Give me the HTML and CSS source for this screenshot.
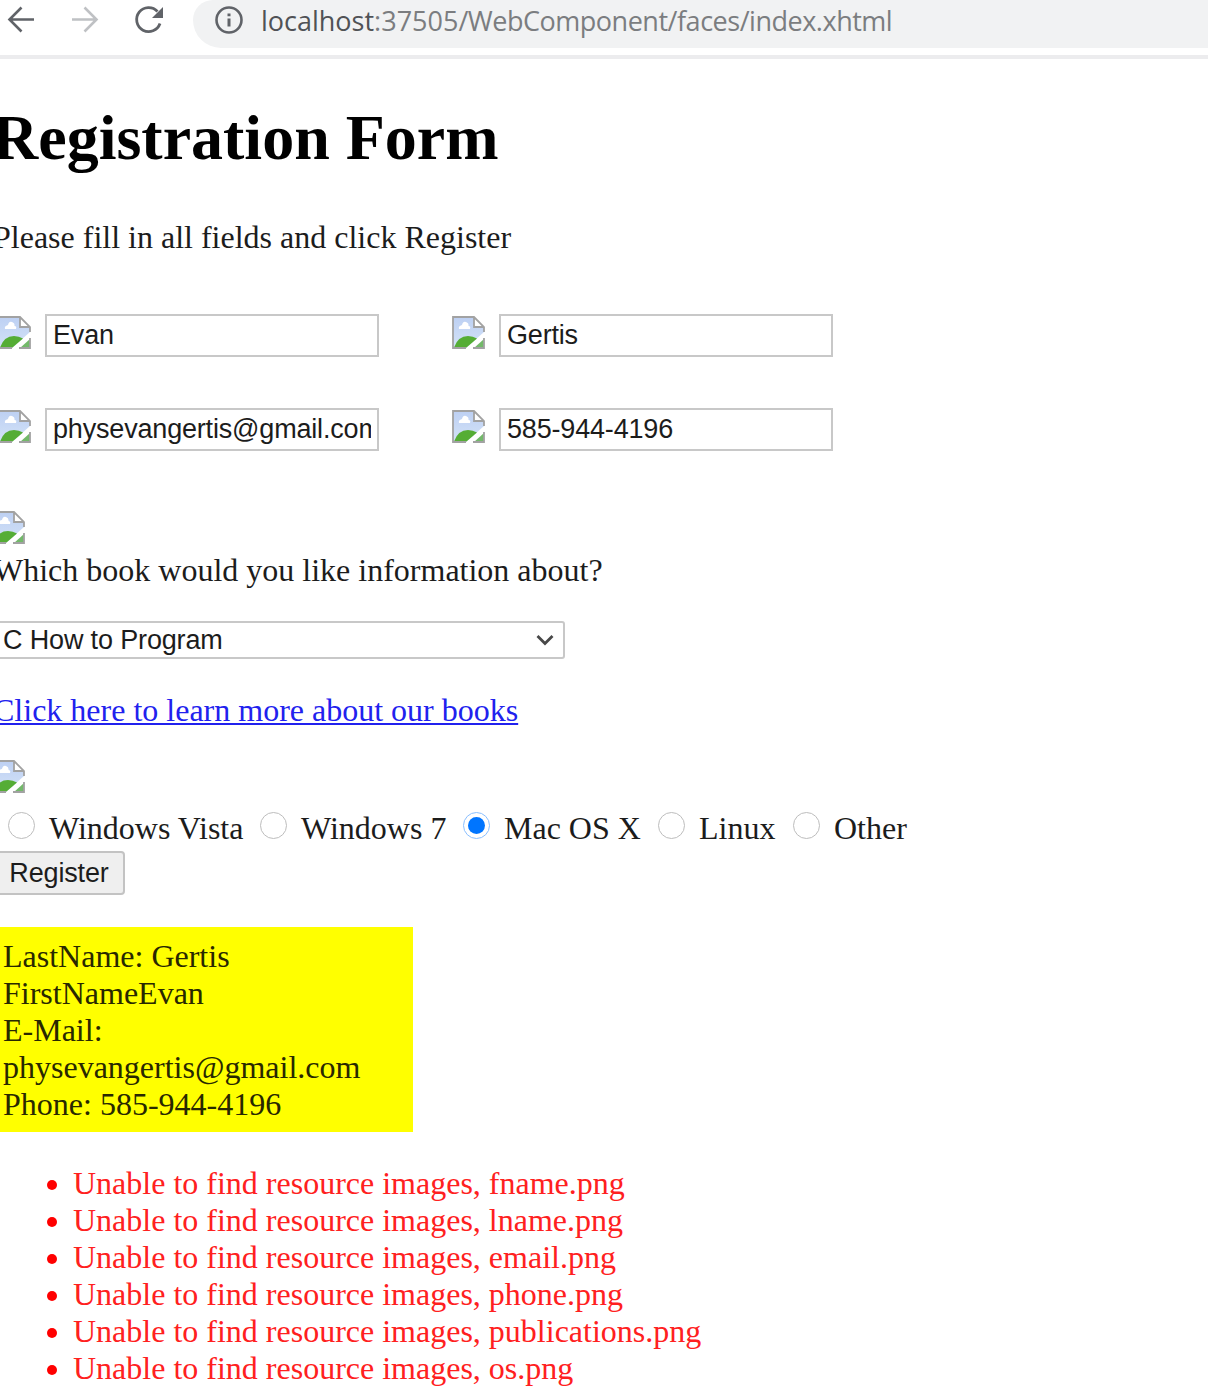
FILE: index.html
```html
<!DOCTYPE html>
<html lang="en">
<head>
<meta charset="utf-8">
<title>Registration Form</title>
<link rel="stylesheet" href="styles.css">
</head>
<body>
<svg class="defs" width="0" height="0" aria-hidden="true">
  <defs>
    <linearGradient id="sky" x1="0" y1="0" x2="0" y2="1"><stop offset="0" stop-color="#bdd0f3"/><stop offset="1" stop-color="#d3e2f7"/></linearGradient>
    <symbol id="broken" viewBox="0 0 33 33">
      <path d="M1 1H22V11H32V16L14 32H1Z" fill="url(#sky)"/>
      <path d="M7 13Q6 10 10 9Q11 5 14 6Q17 7 16.500 10Q19 10 18 13Z" fill="#fff"/>
      <path d="M2 31.500Q6 20 16 20Q21 20 25 22.500L14.500 31.500Z" fill="#55ad35"/>
      <path d="M14 32H1V1H22L32 11V16M22 1V11H32" fill="none" stroke="#a2a2a2" stroke-width="1.8"/>
      <path d="M32 23V32H22Z" fill="#73b96a"/>
      <path d="M32 22V32H21" fill="none" stroke="#a2a2a2" stroke-width="1.8"/>
    </symbol>
  </defs>
</svg>
<header class="toolbar">
  <svg class="nav" viewBox="0 0 190 47" fill="none" stroke="#606368" stroke-width="2.6">
    <path d="M34 19.5H10M21.500 7.500L9.500 19.500L21.500 31.500"/>
    <path d="M72 19.500H96M84.500 7.500L96.500 19.500L84.500 31.500" stroke="#bfc1c4"/>
    <path d="M160 23.500A12 12 0 1 1 157.500 11.500" stroke-width="2.8"/>
    <path d="M163 7V18H152Z" fill="#606368" stroke="none"/>
  </svg>
  <div class="address">
    <svg class="info" viewBox="0 0 28 28" fill="none" stroke="#606368" stroke-width="2.6"><circle cx="14" cy="14" r="12.500"/><path d="M14 12.500V20.500M14 7.500V10.300" stroke-width="3"/></svg>
    <span class="url"><span class="host">localhost</span>:37505<span class="path">/WebComponent/faces/index.xhtml</span></span>
  </div>
</header>
<main class="page">
  <h1 class="title">Registration Form</h1>
  <p class="intro">Please fill in all fields and click Register</p>
  <div class="fields">
    <div class="field"><svg class="broken"><use href="#broken"/></svg><input class="input" value="Evan"></div>
    <div class="field"><svg class="broken"><use href="#broken"/></svg><input class="input" value="Gertis"></div>
    <div class="field"><svg class="broken"><use href="#broken"/></svg><input class="input" value="physevangertis@gmail.com"></div>
    <div class="field"><svg class="broken"><use href="#broken"/></svg><input class="input" value="585-944-4196"></div>
  </div>
  <svg class="broken section-icon"><use href="#broken"/></svg>
  <p class="question">Which book would you like information about?</p>
  <div class="select"><span>C How to Program</span><svg class="chevron" viewBox="0 0 18 12"><path d="M1.500 2L9 9.500L16.500 2" fill="none" stroke="#484848" stroke-width="2.800"/></svg></div>
  <p class="more"><a class="link" href="#">Click here to learn more about our books</a></p>
  <svg class="broken section-icon"><use href="#broken"/></svg>
  <div class="radios">
    <label class="option vista"><span class="dot"></span><span>Windows Vista</span></label>
    <label class="option seven"><span class="dot"></span><span>Windows 7</span></label>
    <label class="option mac"><span class="dot checked"></span><span>Mac OS X</span></label>
    <label class="option linux"><span class="dot"></span><span>Linux</span></label>
    <label class="option"><span class="dot"></span><span>Other</span></label>
  </div>
  <button class="register">Register</button>
  <div class="result">LastName: Gertis<br>FirstNameEvan<br>E-Mail:<br>physevangertis@gmail.com<br>Phone: 585-944-4196</div>
  <ul class="errors">
    <li>Unable to find resource images, fname.png</li>
    <li>Unable to find resource images, lname.png</li>
    <li>Unable to find resource images, email.png</li>
    <li>Unable to find resource images, phone.png</li>
    <li>Unable to find resource images, publications.png</li>
    <li>Unable to find resource images, os.png</li>
  </ul>
</main>
</body>
</html>
```
FILE: styles.css
```css
* { box-sizing: border-box; }
html, body { overflow: hidden; }
body { margin: 0; height: 1393px; background: #fff; color: #1c1c1c; font: 32px/37px "Liberation Serif", "Times New Roman", serif; }
p, h1, ul { margin: 0; }
.defs { position: absolute; }
.toolbar { display: flex; height: 59px; border-bottom: 4px solid #ececee; }
.nav { width: 190px; height: 47px; flex: none; margin-right: 3px; }
.address { flex: 1; height: 48px; padding-left: 22px; display: flex; align-items: flex-start; background: #f1f2f3; border-radius: 20px 0 0 28px; }
.info { width: 28px; height: 28px; margin: 6px 18px 0 0; flex: none; }
.url { font: 27px/41px "Open Sans", sans-serif; color: #7b7d80; white-space: nowrap; }
.host { color: #505256; }
.path { letter-spacing: -0.48px; }
.page { margin-left: -8px; }
.title { height: 72px; margin-top: 43px; font-size: 64px; line-height: 72px; color: #000; white-space: nowrap; }
.intro { margin: 45px 0 0 1px; }
.fields { display: grid; grid-template-columns: 454px 382px; row-gap: 51px; margin: 58px 0 0 6px; }
.field { display: flex; align-items: flex-start; height: 43px; }
.broken { width: 33px; height: 33px; display: block; flex: none; margin: 2px 14px 0 0; }
.input { width: 334px; height: 43px; margin: 0; padding: 0 6px; border: 2px solid #c8c8c8; background: #fff; color: #1c1c1c; font: 27px "Liberation Sans", Arial, sans-serif; letter-spacing: -0.18px; }
.section-icon { margin: 60px 0 0; }
.question { margin: 8px 0 0 1px; }
.select { display: flex; align-items: center; justify-content: space-between; width: 573px; height: 38px; margin-top: 32px; padding: 0 9px 0 9px; border: 2px solid #c8c8c8; border-radius: 3px; font: 27px "Liberation Sans", Arial, sans-serif; letter-spacing: -0.15px; }
.chevron { width: 18px; height: 12px; }
.more { margin: 33px 0 0 1px; }
.link { color: #2121ee; text-decoration-thickness: 2px; text-underline-offset: 2px; }
.more + .section-icon { margin-top: 31px; }
.radios { display: flex; height: 37px; margin: 17px 0 0 17px; white-space: nowrap; }
.option { display: flex; width: 135px; }
.vista { width: 252px; }
.seven { width: 203px; }
.mac { width: 195px; }
.dot { width: 27px; height: 27px; flex: none; margin: 2px 14px 0 -1px; border: 1.5px solid #bdbdbd; border-radius: 50%; display: grid; place-items: center; }
.checked { border-color: #8abfff; }
.checked::after { content: ""; width: 17px; height: 17px; border-radius: 50%; background: #0075ff; }
.register { display: block; width: 133px; height: 44px; margin: 4px 0 0; padding: 0 0 0 1px; border: 2px solid #c3c3c3; border-radius: 4px; background: #efefef; color: #1c1c1c; font: 27px "Liberation Sans", Arial, sans-serif; letter-spacing: -0.15px; }
.result { width: 421px; height: 205px; margin-top: 32px; padding: 11px 11px 9px; background: #ff0; color: #282800; }
.errors { margin-top: 33px; padding-left: 81px; color: #ff2020; line-height: 37.1px; }
.errors li::marker { color: #f00; }
```
